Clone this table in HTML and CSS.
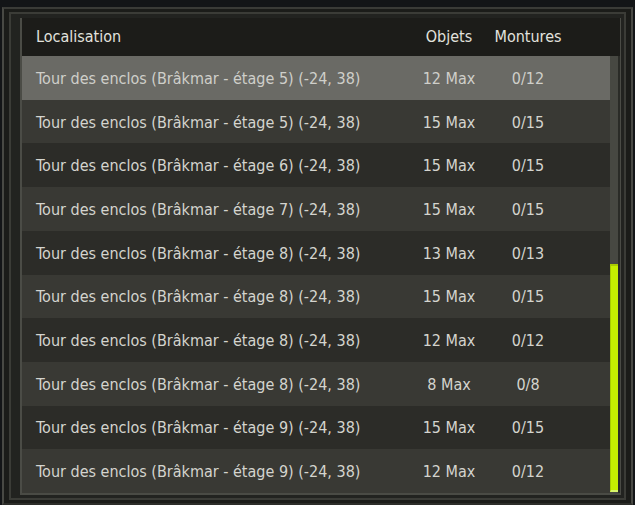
FILE: index.html
```html
<!DOCTYPE html>
<html lang="fr">
<head>
<meta charset="utf-8">
<title>Enclos</title>
<link rel="stylesheet" href="styles.css">
</head>
<body>
<div class="window">
  <div class="f1">
    <div class="f2">
      <div class="panel">
        <div class="header">
          <div class="c-name">Localisation</div>
          <div class="c-num">Objets</div>
          <div class="c-num">Montures</div>
          <div></div>
        </div>
        <div class="body">
          <div class="rows">
            <div class="row selected"><div class="c-name">Tour des enclos (Brâkmar - étage 5) (-24, 38)</div><div class="c-num">12 Max</div><div class="c-num">0/12</div></div>
            <div class="row light"><div class="c-name">Tour des enclos (Brâkmar - étage 5) (-24, 38)</div><div class="c-num">15 Max</div><div class="c-num">0/15</div></div>
            <div class="row dark"><div class="c-name">Tour des enclos (Brâkmar - étage 6) (-24, 38)</div><div class="c-num">15 Max</div><div class="c-num">0/15</div></div>
            <div class="row light"><div class="c-name">Tour des enclos (Brâkmar - étage 7) (-24, 38)</div><div class="c-num">15 Max</div><div class="c-num">0/15</div></div>
            <div class="row dark"><div class="c-name">Tour des enclos (Brâkmar - étage 8) (-24, 38)</div><div class="c-num">13 Max</div><div class="c-num">0/13</div></div>
            <div class="row light"><div class="c-name">Tour des enclos (Brâkmar - étage 8) (-24, 38)</div><div class="c-num">15 Max</div><div class="c-num">0/15</div></div>
            <div class="row dark"><div class="c-name">Tour des enclos (Brâkmar - étage 8) (-24, 38)</div><div class="c-num">12 Max</div><div class="c-num">0/12</div></div>
            <div class="row light"><div class="c-name">Tour des enclos (Brâkmar - étage 8) (-24, 38)</div><div class="c-num">8 Max</div><div class="c-num">0/8</div></div>
            <div class="row dark"><div class="c-name">Tour des enclos (Brâkmar - étage 9) (-24, 38)</div><div class="c-num">15 Max</div><div class="c-num">0/15</div></div>
            <div class="row light"><div class="c-name">Tour des enclos (Brâkmar - étage 9) (-24, 38)</div><div class="c-num">12 Max</div><div class="c-num">0/12</div></div>
          </div>
          <div class="scrollbar">
            <div class="thumb"></div>
          </div>
        </div>
      </div>
    </div>
  </div>
</div>
</body>
</html>
```

FILE: styles.css
```css
* { box-sizing: border-box; }
html, body { margin: 0; padding: 0; }
body {
  width: 635px;
  height: 505px;
  overflow: hidden;
  background: #141618;
  font-family: "DejaVu Sans Condensed", "DejaVu Sans", Verdana, sans-serif;
  font-size: 16px;
}
.window {
  height: 505px;
  padding: 7px 2px 0 2px;
  background: #131517;
}
.f1 {
  height: 100%;
  border: 2px solid #484944;
  border-top-color: #3a3b37;
  border-bottom-color: #2c2d29;
  padding: 3px 5px 3px 5px;
  background: #1b1c19;
}
.f2 {
  height: 100%;
  border: 2px solid #3b3c37;
  padding: 4px 3px 3px 3px;
  background: #222320;
}
.panel {
  height: 100%;
  border-left: 2px solid #4b4c46;
  border-right: 1px solid #4a4b45;
  border-bottom: 2px solid #4a4b45;
  display: flex;
  flex-direction: column;
  background: #1c1c19;
  margin-left: 6px;
}
.header {
  height: 38px;
  flex: none;
  display: grid;
  grid-template-columns: 1fr 80px 78px 53px;
  align-items: center;
  background: #1c1c19;
  color: #e2e2de;
  padding-left: 14px;
  padding-bottom: 1px;
}
.body {
  flex: 1;
  display: flex;
  min-height: 0;
}
.rows {
  flex: 1;
  display: flex;
  flex-direction: column;
}
.row {
  flex: 1;
  display: grid;
  grid-template-columns: 1fr 80px 78px 43px;
  align-items: center;
  padding-left: 14px;
  padding-top: 1px;
  color: #d4d4ce;
}
.row.selected { background: #6a6a65; color: #cfcfca; }
.row.light { background: #393934; }
.row.dark { background: #2c2c28; }
.c-name { white-space: nowrap; }
.c-num { text-align: center; white-space: nowrap; }
.scrollbar {
  width: 10px;
  flex: none;
  background: #474842;
  border-right: 2px solid #2a2b27;
  display: flex;
  flex-direction: column;
  justify-content: flex-end;
  padding-bottom: 1px;
}
.thumb {
  height: 228px;
  background: #c6ef00;
  border-top: 2px solid #a9cc00;
  border-left: 1px solid #a9cc00;
  border-bottom: 2px solid #d8f56a;
}
```
